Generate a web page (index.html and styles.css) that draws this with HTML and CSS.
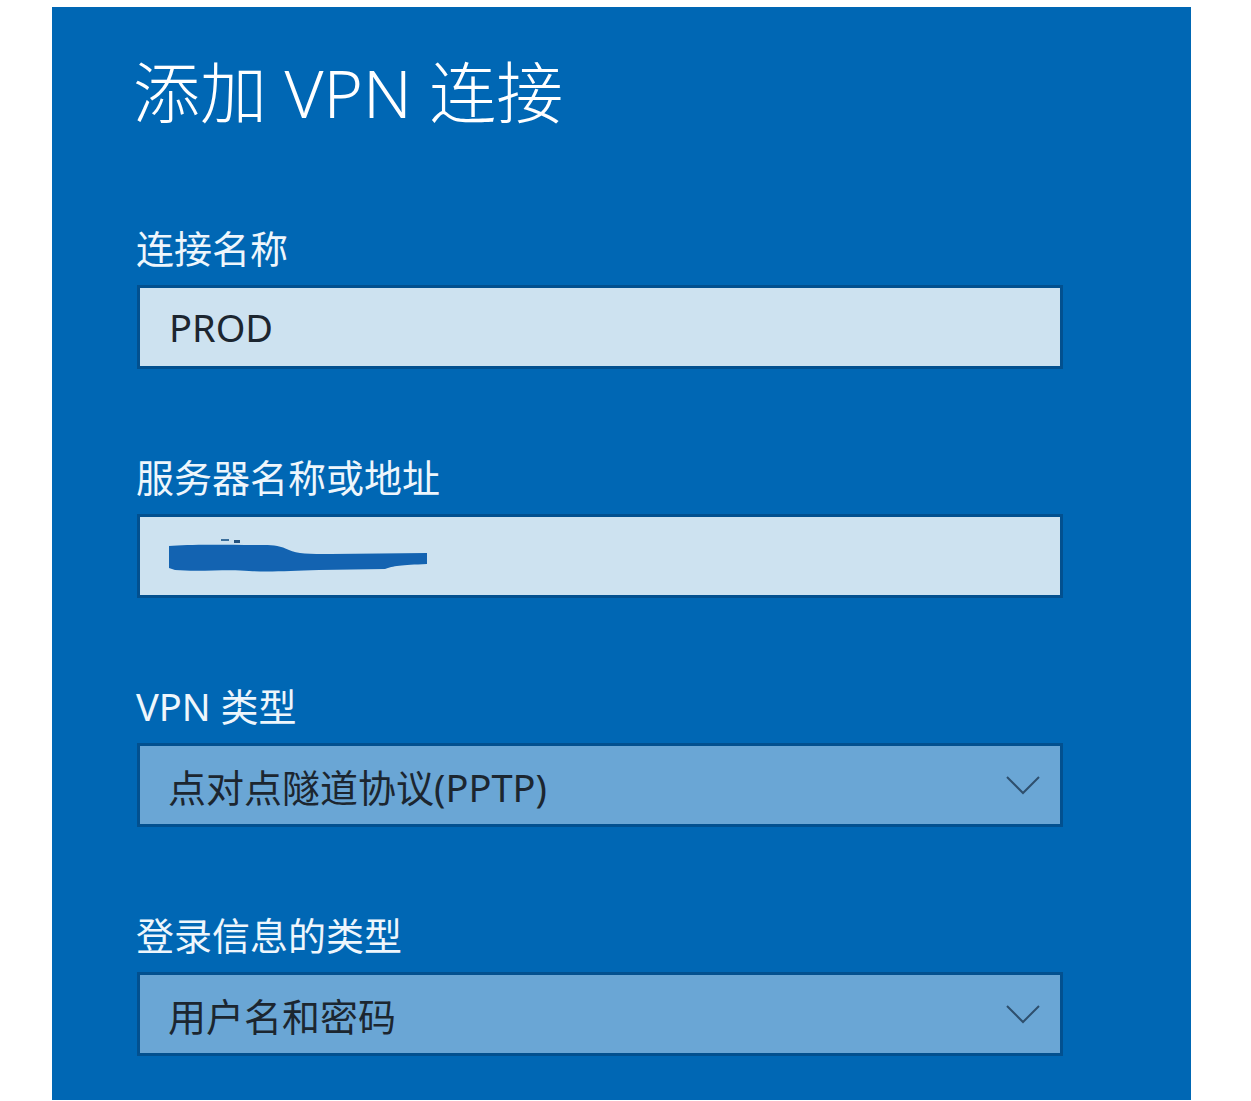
FILE: index.html
```html
<!DOCTYPE html>
<html lang="zh-CN">
<head>
    <meta charset="UTF-8">
    <meta name="viewport" content="width=device-width, initial-scale=1.0">
    <title>添加 VPN 连接</title>
    <link rel="stylesheet" href="styles.css">
</head>
<body>
    <div class="panel">
        <h1 class="title">添加 VPN 连接</h1>

        <div class="form-group">
            <label class="label">连接名称</label>
            <div class="field field-text">PROD</div>
        </div>

        <div class="form-group">
            <label class="label">服务器名称或地址</label>
            <div class="field field-text">
                <!-- address blacked out in the original -->
                <svg class="redact" width="262" height="44" viewBox="0 0 262 44">
                    <path d="M0 12 C20 10 60 11 95 11 C105 11 112 12 120 16 C128 20 140 20 162 20 L258 19 L258 30 C232 31 224 32 216 35 L150 36 C120 37 100 38 80 37 C60 35 30 38 6 36 L0 34 Z" fill="#1363b1"/>
                    <rect x="52" y="5" width="8" height="2" fill="#3b6f9c"/>
                    <rect x="65" y="6" width="6" height="3" fill="#24537f"/>
                </svg>
            </div>
        </div>

        <div class="form-group">
            <label class="label">VPN 类型</label>
            <div class="field field-select">
                <span>点对点隧道协议(PPTP)</span>
                <svg class="chevron" width="34" height="20" viewBox="0 0 34 20">
                    <path d="M1 2 L17 18 L33 2" fill="none" stroke="#2e4f6d" stroke-width="2"/>
                </svg>
            </div>
        </div>

        <div class="form-group">
            <label class="label">登录信息的类型</label>
            <div class="field field-select">
                <span>用户名和密码</span>
                <svg class="chevron" width="34" height="20" viewBox="0 0 34 20">
                    <path d="M1 2 L17 18 L33 2" fill="none" stroke="#2e4f6d" stroke-width="2"/>
                </svg>
            </div>
        </div>
    </div>
</body>
</html>
```

FILE: styles.css
```css
body {
    margin: 0;
    padding: 0;
    background-color: #fff;
    font-family: "Noto Sans", "Noto Sans CJK SC", sans-serif;
}

.panel {
    width: 1139px;
    height: 1093px;
    margin: 7px 0 0 52px;
    padding: 45px 0 0 84px;
    box-sizing: border-box;
    background-color: #0067b4;
    overflow: hidden;
}

.title {
    margin: 0 0 92px -3px;
    font-size: 67px;
    line-height: 80px;
    font-weight: 300;
    color: #fff;
}

.form-group {
    display: flex;
    flex-direction: column;
    gap: 13px;
    margin-bottom: 84px;
}

.label {
    display: block;
    font-size: 38px;
    line-height: 48px;
    color: #eef6fc;
}

.field {
    display: flex;
    align-items: center;
    justify-content: space-between;
    width: 926px;
    height: 84px;
    margin-left: 1px;
    padding: 0 20px 0 26px;
    box-sizing: border-box;
    border: 3px solid #02508f;
    font-size: 38px;
    color: #1c2630;
}

.field-text {
    background-color: #cde2f0;
}

.field-text:first-of-type {
    padding-left: 29px;
}

.field-select {
    background-color: #6aa6d5;
    padding-left: 28px;
}

.redact {
    display: block;
}
```
